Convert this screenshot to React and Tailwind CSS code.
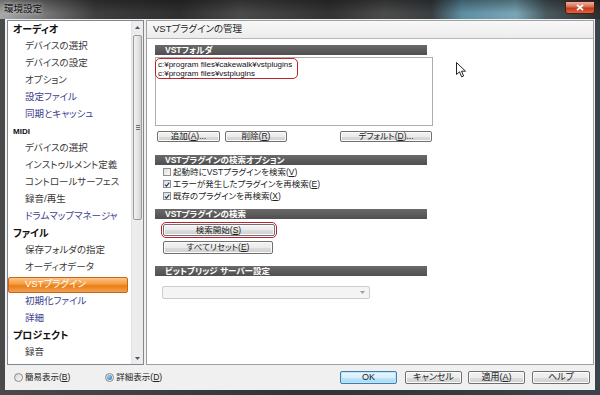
import React from "react";

const treeItems = [
  { t: "オーディオ", h: 1 },
  { t: "デバイスの選択" },
  { t: "デバイスの設定" },
  { t: "オプション" },
  { t: "設定ファイル", v: 1 },
  { t: "同期とキャッシュ", v: 1 },
  { t: "MIDI", h: 1, s: 1 },
  { t: "デバイスの選択" },
  { t: "インストゥルメント定義" },
  { t: "コントロールサーフェス" },
  { t: "録音/再生" },
  { t: "ドラムマップマネージャ", v: 1 },
  { t: "ファイル", h: 1 },
  { t: "保存フォルダの指定" },
  { t: "オーディオデータ" },
  { t: "VSTプラグイン", sel: 1 },
  { t: "初期化ファイル", v: 1 },
  { t: "詳細", v: 1 },
  { t: "プロジェクト", h: 1 },
  { t: "録音" },
];

function TreeRow({ it }) {
  if (it.h) {
    return (
      <div className={`h-[17px] flex items-center pl-[5px] font-bold text-[#111] ${it.s ? "text-[8px]" : "text-[10px]"}`}>
        {it.t}
      </div>
    );
  }
  if (it.sel) {
    return (
      <div className="h-[17px] flex items-center">
        <div className="w-[120px] h-[16px] rounded-[2px] border border-[#c9661a] bg-[linear-gradient(180deg,#fbc58a_0%,#f39a3c_45%,#ea7d12_55%,#f0a055_100%)] flex items-center pl-[16px] text-[9.5px] text-white">
          {it.t}
        </div>
      </div>
    );
  }
  return (
    <div className={`h-[17px] flex items-center pl-[17px] text-[9.5px] ${it.v ? "text-[#3d3d8c]" : "text-[#3a3a3a]"}`}>
      {it.t}
    </div>
  );
}

function Btn({ className = "", children, def }) {
  return (
    <div
      className={`flex items-center justify-center rounded-[2px] border text-[8.5px] text-[#222] ${
        def
          ? "border-[#3c7fb1] bg-[linear-gradient(180deg,#eaf6fd_0%,#d9f0fc_50%,#bee6fd_51%,#a7d9f5_100%)] shadow-[inset_0_0_0_1px_#bfe4f7]"
          : "border-[#707070] bg-[linear-gradient(180deg,#f2f2f2_0%,#ebebeb_50%,#dddddd_51%,#cfcfcf_100%)] shadow-[inset_0_0_0_1px_#fbfbfb]"
      } ${className}`}
    >
      {children}
    </div>
  );
}

function SectionBar({ children, className = "" }) {
  return (
    <div className={`w-[272px] h-[10px] bg-[linear-gradient(180deg,#6a6a6a,#4f4f4f)] text-white font-bold text-[8.5px] leading-[10px] pl-[10px] ${className}`}>
      {children}
    </div>
  );
}

function Check({ checked, children }) {
  return (
    <div className="h-[12px] flex items-center pl-[8px] text-[8.5px] text-[#222]">
      <div className="w-[8px] h-[8px] border border-[#8e8f8f] bg-[linear-gradient(135deg,#dcdcdc,#fbfbfb)] flex items-center justify-center">
        {checked && (
          <svg width="7" height="7" viewBox="0 0 7 7">
            <path d="M1 3.6 L2.9 5.4 L6.2 1.2" fill="none" stroke="#1f3a6e" strokeWidth="1.4" />
          </svg>
        )}
      </div>
      <span className="ml-[2px]">{children}</span>
    </div>
  );
}

function Radio({ checked, children, className = "" }) {
  return (
    <div className={`flex items-center text-[8.5px] text-[#222] ${className}`}>
      <div className="w-[9px] h-[9px] rounded-full border border-[#8a8a8a] bg-[linear-gradient(135deg,#d6d6d6,#fafafa)] flex items-center justify-center">
        {checked && <div className="w-[5px] h-[5px] rounded-full bg-[radial-gradient(circle_at_35%_35%,#8fd0f5,#1d6fb2)]" />}
      </div>
      <span className="ml-[2px]">{children}</span>
    </div>
  );
}

export default function App() {
  return (
    <div className="relative w-[600px] h-[395px] overflow-hidden bg-[linear-gradient(90deg,#4a4a4a,#2f3436_50%,#3a4448)] font-['Liberation_Sans','Noto_Sans_CJK_JP',sans-serif] [font-feature-settings:'palt']">
      {/* title bar */}
      <div className="h-[19px] flex items-start bg-[linear-gradient(180deg,rgba(0,0,0,0.35)_0%,rgba(0,0,0,0)_70%),linear-gradient(90deg,#a8a8a8_0%,#7a7a7a_7%,#3e3e3e_16%,#303030_30%,#4a4a4a_40%,#333333_55%,#4b4b4b_64%,#3a3f42_72%,#5e8ea2_77%,#79a6b7_86%,#4a5a60_91%,#2e2e2e_100%)]">
        <div className="pl-[4px] pt-[3px] text-[9.5px] leading-[11px] text-[#111] [text-shadow:0_0_4px_#e8e8e8]">環境設定</div>
        <div className="ml-auto mr-[5px] mt-[1px] w-[30px] h-[13px] rounded-b-[3px] rounded-t-[1px] border border-[#4e1a12] bg-[linear-gradient(180deg,#eab3a4_0%,#d66a4e_45%,#c0391c_55%,#d9683e_100%)] flex items-center justify-center">
          <svg width="8" height="7" viewBox="0 0 8 7">
            <path d="M1 0.8 L7 6.2 M7 0.8 L1 6.2" stroke="white" strokeWidth="1.8" />
          </svg>
        </div>
      </div>

      {/* client */}
      <div className="mx-[5px] h-[371px] bg-[#f0f0f0] flex flex-col">
        <div className="flex h-[346px] pt-[1px]">
          {/* tree */}
          <div className="ml-[2px] w-[137px] h-full border border-[#828790] bg-white flex">
            <div className="flex-1 flex flex-col">
              {treeItems.map((it, i) => (
                <TreeRow key={i} it={it} />
              ))}
            </div>
            <div className="w-[12px] h-full bg-[#ececec] border-l border-[#e2e2e2] flex flex-col items-center">
              <div className="h-[12px] flex items-center justify-center">
                <svg width="5" height="3" viewBox="0 0 5 3"><path d="M0 3 L2.5 0 L5 3 Z" fill="#555" /></svg>
              </div>
              <div className="mt-[2px] w-[9px] h-[185px] rounded-[2px] border border-[#9a9a9a] bg-[linear-gradient(90deg,#f3f3f3,#e2e2e2_60%,#d2d2d2)] flex items-center justify-center">
                <div className="flex flex-col gap-[1px]">
                  <div className="w-[4px] h-[1px] bg-[#707070]" />
                  <div className="w-[4px] h-[1px] bg-[#707070]" />
                  <div className="w-[4px] h-[1px] bg-[#707070]" />
                </div>
              </div>
              <div className="flex-1" />
              <div className="h-[12px] flex items-center justify-center">
                <svg width="5" height="3" viewBox="0 0 5 3"><path d="M0 0 L2.5 3 L5 0 Z" fill="#555" /></svg>
              </div>
            </div>
          </div>

          {/* right panel */}
          <div className="ml-[2px] w-[448px] h-full border border-[#a0a0a0] bg-white flex flex-col">
            <div className="h-[18px] shrink-0 bg-[linear-gradient(180deg,#f8f8f8,#ececec)] border-b border-[#b8b8b8] pl-[6px] flex items-center text-[9.5px] text-[#1e1e1e]">
              VSTプラグインの管理
            </div>
            <div className="flex-1 pl-[8px] flex flex-col items-start">
              <SectionBar className="mt-[6px]">VSTフォルダ</SectionBar>
              <div className="mt-[2px] w-[278px] h-[69px] border border-[#abadb3] bg-white">
                <div className="w-[143px] h-[21px] -ml-[1px] border-[1.5px] border-[#c0202a] rounded-[5px] pl-[2px] flex flex-col justify-center text-[8px] leading-[9px] text-[#111]">
                  <div>c:¥program files¥cakewalk¥vstplugins</div>
                  <div>c:¥program files¥vstplugins</div>
                </div>
              </div>
              <div className="mt-[5px] w-[277px] flex">
                <Btn className="ml-[2px] w-[63px] h-[11px]">追加(<u>A</u>)...</Btn>
                <Btn className="ml-[5px] w-[62px] h-[11px]">削除(<u>R</u>)</Btn>
                <Btn className="ml-auto w-[92px] h-[11px]">デフォルト(<u>D</u>)...</Btn>
              </div>
              <SectionBar className="mt-[13px]">VSTプラグインの検索オプション</SectionBar>
              <div className="mt-[1px] flex flex-col">
                <Check>起動時にVSTプラグインを検索(<u>V</u>)</Check>
                <Check checked>エラーが発生したプラグインを再検索(<u>E</u>)</Check>
                <Check checked>既存のプラグインを再検索(<u>X</u>)</Check>
              </div>
              <SectionBar className="mt-[7px]">VSTプラグインの検索</SectionBar>
              <div className="mt-[3px] ml-[6px] w-[116px] h-[16px] border-[1.5px] border-[#c0202a] rounded-[5px] flex items-center pl-[0.5px]">
                <Btn className="w-[112px] h-[12px]">検索開始(<u>S</u>)</Btn>
              </div>
              <Btn className="mt-[3px] ml-[8px] w-[110px] h-[13px]">すべてリセット(<u>E</u>)</Btn>
              <SectionBar className="mt-[12px]">ビットブリッジ サーバー設定</SectionBar>
              <div className="mt-[10px] ml-[7px] w-[208px] h-[13px] rounded-[2px] border border-[#cdcdcd] bg-[#f4f4f4] flex items-center justify-end pr-[4px]">
                <svg width="5" height="3" viewBox="0 0 5 3"><path d="M0 0 L2.5 3 L5 0 Z" fill="#a0a0a0" /></svg>
              </div>
            </div>
          </div>
        </div>

        {/* bottom bar */}
        <div className="flex-1 flex items-center pl-[9px] pr-[5px]">
          <Radio>簡易表示(<u>B</u>)</Radio>
          <Radio checked className="ml-[35px]">詳細表示(<u>D</u>)</Radio>
          <div className="ml-auto flex">
            <Btn def className="w-[57px] h-[13px] text-[9px]">OK</Btn>
            <Btn className="ml-[8px] w-[57px] h-[13px] text-[9px]">キャンセル</Btn>
            <Btn className="ml-[6px] w-[57px] h-[13px] text-[9px]">適用(<u>A</u>)</Btn>
            <Btn className="ml-[7px] w-[58px] h-[13px] text-[9px]">ヘルプ</Btn>
          </div>
        </div>
      </div>

      {/* mouse cursor */}
      <svg className="absolute left-[456px] top-[62px]" width="11" height="16" viewBox="0 0 11 16">
        <path d="M0.5 0.5 L0.5 12.5 L3.5 9.8 L5.6 14.8 L7.6 14 L5.5 9.2 L9.5 9.2 Z" fill="white" stroke="#222" strokeWidth="1" strokeLinejoin="round" />
      </svg>
    </div>
  );
}
